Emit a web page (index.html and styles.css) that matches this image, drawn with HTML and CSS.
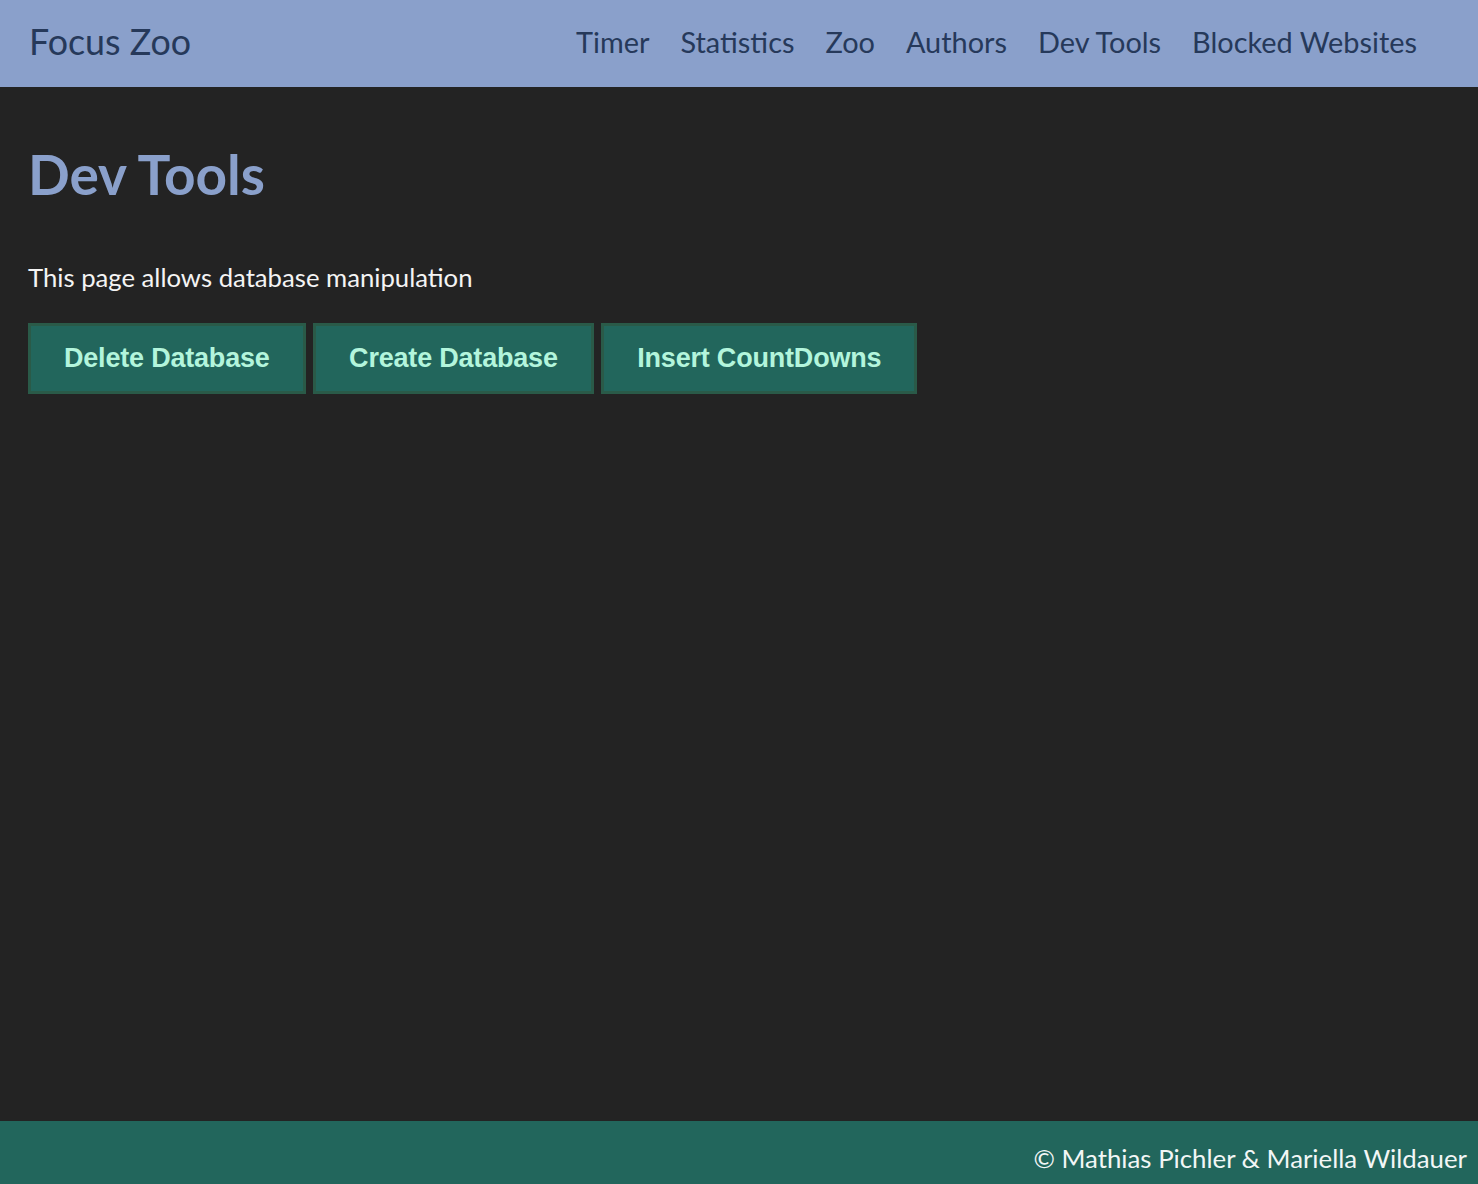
FILE: index.html
```html
<!DOCTYPE html>
<html lang="en">
<head>
<meta charset="utf-8">
<title>Dev Tools - Focus Zoo</title>
<link rel="stylesheet" href="styles.css">
</head>
<body>
<header class="topbar">
  <div class="brand">Focus Zoo</div>
  <nav class="nav">
    <a href="#">Timer</a>
    <a href="#">Statistics</a>
    <a href="#">Zoo</a>
    <a href="#">Authors</a>
    <a href="#">Dev Tools</a>
    <a href="#">Blocked Websites</a>
  </nav>
</header>
<main class="content">
  <h1 class="title">Dev Tools</h1>
  <p class="intro">This page allows database manipulation</p>
  <div class="actions">
    <button class="btn">Delete Database</button>
    <button class="btn">Create Database</button>
    <button class="btn">Insert CountDowns</button>
  </div>
</main>
<footer class="footer">© Mathias Pichler &amp; Mariella Wildauer</footer>
</body>
</html>
```
FILE: styles.css
```css
html, body {
  margin: 0;
  padding: 0;
  height: 100%;
}
body {
  background: #232323;
  font-family: Lato, "Open Sans", sans-serif;
  display: flex;
  flex-direction: column;
  min-height: 100vh;
}
.topbar {
  background: #8aa0cb;
  height: 87px;
  display: flex;
  align-items: center;
  justify-content: space-between;
  padding: 0 61px 0 29px;
  box-sizing: border-box;
  flex-shrink: 0;
}
.brand {
  color: #26395a;
  font-size: 35.8px;
  line-height: 40px;
  margin-top: -4px;
}
.nav {
  display: flex;
  gap: 31px;
  margin-top: -4px;
}
.nav a {
  color: #26395a;
  text-decoration: none;
  font-size: 28.9px;
  line-height: 36px;
}
.content {
  flex: 1;
  padding: 0 28px;
}
.title {
  margin: 56px 0 0 0;
  color: #8aa0cb;
  font-size: 55px;
  font-weight: 700;
  line-height: 62px;
}
.intro {
  margin: 57px 0 0;
  color: #f4f4f4;
  font-size: 25.7px;
  line-height: 30px;
}
.actions {
  display: flex;
  gap: 7.5px;
  margin-top: 31px;
}
.btn {
  font-family: "Liberation Sans", Arial, sans-serif;
  font-weight: 700;
  font-size: 27px;
  letter-spacing: -0.2px;
  color: #b3f5dc;
  background: #22665c;
  border: 3px solid #2a5a48;
  height: 71px;
  padding: 0 33px;
  box-sizing: border-box;
}
.footer {
  background: #22665c;
  height: 63px;
  color: #f2f6f6;
  font-size: 25.8px;
  display: flex;
  align-items: center;
  justify-content: flex-end;
  padding: 10px 11px 0 0;
  box-sizing: border-box;
  flex-shrink: 0;
}
```
